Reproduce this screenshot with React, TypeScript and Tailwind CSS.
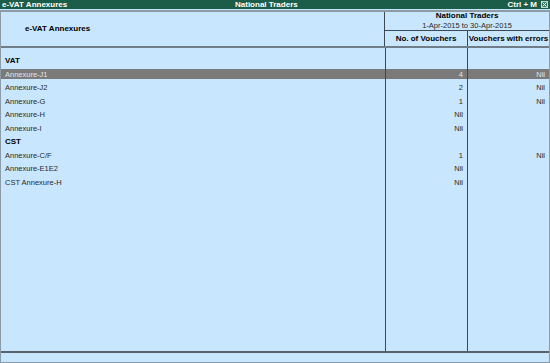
import React from "react";

type RowT = { label: string; v1?: string; v2?: string; bold?: boolean; hl?: boolean };

const rows: RowT[] = [
  { label: "VAT", bold: true },
  { label: "Annexure-J1", v1: "4", v2: "Nil", hl: true },
  { label: "Annexure-J2", v1: "2", v2: "Nil" },
  { label: "Annexure-G", v1: "1", v2: "Nil" },
  { label: "Annexure-H", v1: "Nil" },
  { label: "Annexure-I", v1: "Nil" },
  { label: "CST", bold: true },
  { label: "Annexure-C/F", v1: "1", v2: "Nil" },
  { label: "Annexure-E1E2", v1: "Nil" },
  { label: "CST Annexure-H", v1: "Nil" },
];

function Row({ r }: { r: RowT }) {
  const inner = r.hl ? "bg-[#7a7a7a] text-[#e4e4e4]" : "text-[#2a2a2a]";
  return (
    <div className="flex h-[13.5px]">
      <div className="flex-1 flex items-center">
        <div
          className={`h-[10px] w-full flex items-center pl-[4px] ${inner} ${
            r.bold ? "font-bold text-[8px] !text-black" : "text-[7.5px]"
          }`}
        >
          {r.label}
        </div>
      </div>
      <div className="w-[82px] border-l border-[#3c4852] flex items-center">
        <div className={`h-[10px] w-full flex items-center justify-end pr-[4px] text-[7.5px] ${inner}`}>
          {r.v1}
        </div>
      </div>
      <div className="w-[82px] border-l border-[#3c4852] flex items-center">
        <div className={`h-[10px] w-full flex items-center justify-end pr-[4px] text-[7.5px] ${inner}`}>
          {r.v2}
        </div>
      </div>
    </div>
  );
}

export default function App() {
  return (
    <div className="w-[550px] h-[363px] bg-[#c8e6fd] flex flex-col overflow-hidden font-['Liberation_Sans',Arial,sans-serif] leading-none">
      {/* Title bar */}
      <div className="h-[9px] bg-[#1b5d49] flex items-center text-white text-[8px] font-bold">
        <div className="w-[235px] pl-[2px]">e-VAT Annexures</div>
        <div>National Traders</div>
        <div className="flex-1" />
        <div className="pr-[4px]">Ctrl + M</div>
        <div className="w-[7px] h-[7px] mr-[2px] border border-[#c8d8d0] bg-[#3b7a66] flex items-center justify-center">
          <svg width="5" height="5" viewBox="0 0 5 5">
            <path d="M0.5 0.5L4.5 4.5M4.5 0.5L0.5 4.5" stroke="#e8f0ec" strokeWidth="1" />
          </svg>
        </div>
      </div>
      <div className="h-[1px]" />
      {/* Main frame */}
      <div className="flex-1 flex flex-col border-x border-[#8c9ba6]">
        <div className="h-[2px] bg-[#8c9ba6]" />
        {/* Header */}
        <div className="h-[34px] flex">
          <div className="flex-1 flex items-center pl-[24px] text-[8px] font-bold text-black">
            e-VAT Annexures
          </div>
          <div className="w-[165px] border-l border-[#3c4852] flex flex-col">
            <div className="h-[18px] flex flex-col items-center justify-center gap-[2px]">
              <div className="text-[8px] font-bold text-black">National Traders</div>
              <div className="text-[7.5px] text-[#2a2a2a]">1-Apr-2015 to 30-Apr-2015</div>
            </div>
            <div className="h-[1px] bg-[#3c4852]" />
            <div className="flex-1 flex text-[8px] font-bold text-black">
              <div className="w-[82px] flex items-center justify-center">No. of Vouchers</div>
              <div className="flex-1 border-l border-[#3c4852] flex items-center justify-center">
                Vouchers with errors
              </div>
            </div>
          </div>
        </div>
        <div className="h-[2px] bg-[#6f7d88]" />
        {/* Body */}
        <div className="flex-1 flex flex-col">
          <div className="flex h-[6px]">
            <div className="flex-1" />
            <div className="w-[82px] border-l border-[#3c4852]" />
            <div className="w-[82px] border-l border-[#3c4852]" />
          </div>
          {rows.map((r, i) => (
            <Row key={i} r={r} />
          ))}
          <div className="flex flex-1">
            <div className="flex-1" />
            <div className="w-[82px] border-l border-[#3c4852]" />
            <div className="w-[82px] border-l border-[#3c4852]" />
          </div>
        </div>
        <div className="h-[2px] bg-[#56636d]" />
        <div className="h-[9px]" />
        <div className="h-[1px] bg-[#8c9ba6]" />
      </div>
    </div>
  );
}
